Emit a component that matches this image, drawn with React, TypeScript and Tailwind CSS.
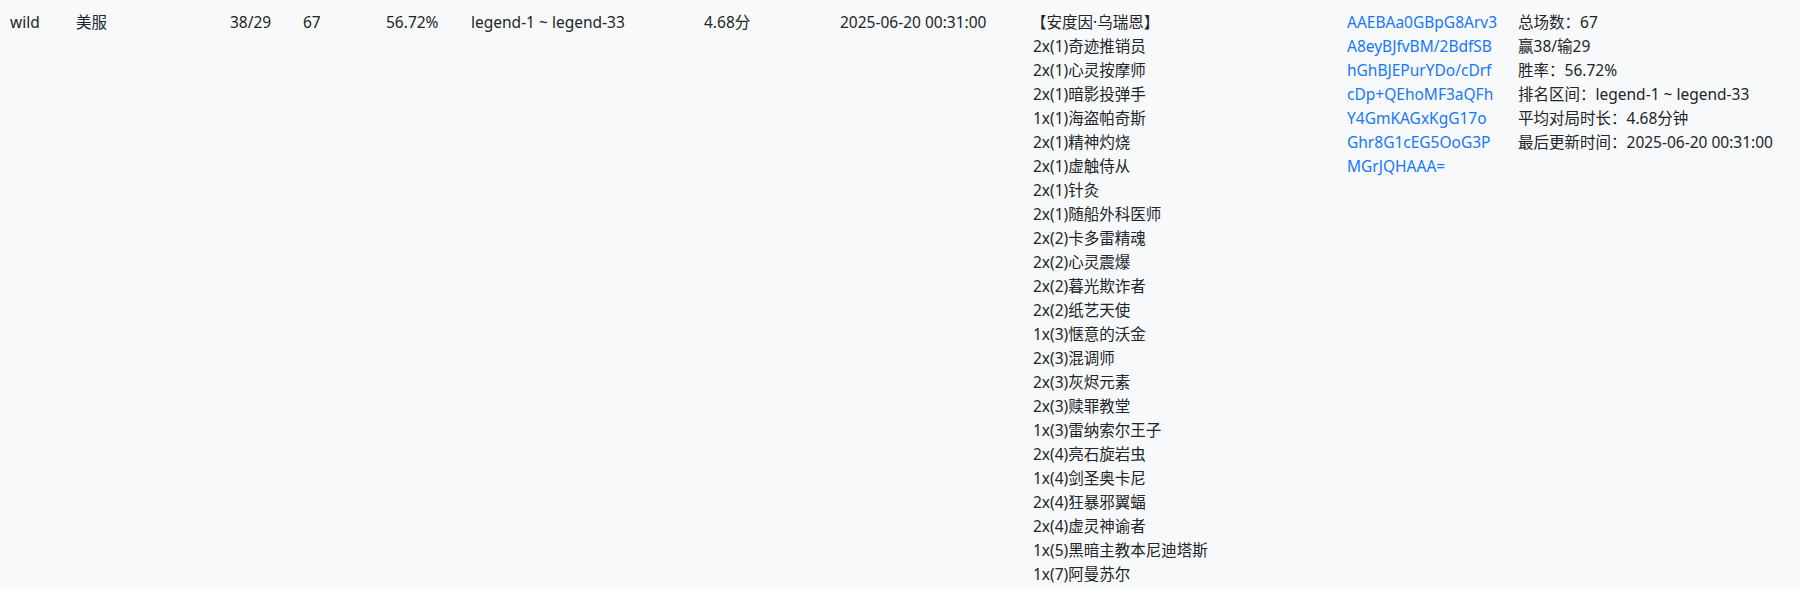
import React from 'react';

interface DeckRow {
  mode: string;
  server: string;
  record: string;
  games: number;
  winRate: string;
  rankRange: string;
  avgDuration: string;
  updatedAt: string;
  hero: string;
  cards: string[];
  code: string[];
}

const row: DeckRow = {
  mode: 'wild',
  server: '美服',
  record: '38/29',
  games: 67,
  winRate: '56.72%',
  rankRange: 'legend-1 ~ legend-33',
  avgDuration: '4.68分',
  updatedAt: '2025-06-20 00:31:00',
  hero: '【安度因·乌瑞恩】',
  cards: [
    '2x(1)奇迹推销员',
    '2x(1)心灵按摩师',
    '2x(1)暗影投弹手',
    '1x(1)海盗帕奇斯',
    '2x(1)精神灼烧',
    '2x(1)虚触侍从',
    '2x(1)针灸',
    '2x(1)随船外科医师',
    '2x(2)卡多雷精魂',
    '2x(2)心灵震爆',
    '2x(2)暮光欺诈者',
    '2x(2)纸艺天使',
    '1x(3)惬意的沃金',
    '2x(3)混调师',
    '2x(3)灰烬元素',
    '2x(3)赎罪教堂',
    '1x(3)雷纳索尔王子',
    '2x(4)亮石旋岩虫',
    '1x(4)剑圣奥卡尼',
    '2x(4)狂暴邪翼蝠',
    '2x(4)虚灵神谕者',
    '1x(5)黑暗主教本尼迪塔斯',
    '1x(7)阿曼苏尔',
  ],
  // deck code wraps inside the narrow column, keep the same breaks
  code: [
    'AAEBAa0GBpG8Arv3',
    'A8eyBJfvBM/2BdfSB',
    'hGhBJEPurYDo/cDrf',
    'cDp+QEhoMF3aQFh',
    'Y4GmKAGxKgG17o',
    'Ghr8G1cEG5OoG3P',
    'MGrJQHAAA=',
  ],
};

const cell = 'px-[10px] py-[10px] whitespace-nowrap';

export default function App() {
  const [wins, losses] = row.record.split('/');

  return (
    <div
      className="min-h-screen w-full bg-[#f8f9fa] text-[#212529] text-[15.5px] leading-6"
      style={{ fontFamily: '"Noto Sans", "Noto Sans CJK SC", sans-serif' }}
    >
      <div className="grid grid-cols-[66px_154px_73px_83px_85px_233px_136px_193px_314px_171px_1fr] items-start">
        <div className={cell}>{row.mode}</div>
        <div className={cell}>{row.server}</div>
        <div className={cell}>{row.record}</div>
        <div className={cell}>{row.games}</div>
        <div className={cell}>{row.winRate}</div>
        <div className={cell}>{row.rankRange}</div>
        <div className={cell}>{row.avgDuration}</div>
        <div className={cell}>{row.updatedAt}</div>
        <div className={cell}>
          <div className="-ml-[2px]">{row.hero}</div>
          {row.cards.map((c, i) => (
            <div key={i}>{c}</div>
          ))}
        </div>
        <div className={`${cell} text-[#1677ff]`}>
          {row.code.map((part, i) => (
            <div key={i}>{part}</div>
          ))}
        </div>
        <div className={cell}>
          <div>总场数：{row.games}</div>
          <div>
            赢{wins}/输{losses}
          </div>
          <div>胜率：{row.winRate}</div>
          <div>排名区间：{row.rankRange}</div>
          <div>平均对局时长：{row.avgDuration}钟</div>
          <div>最后更新时间：{row.updatedAt}</div>
        </div>
      </div>
    </div>
  );
}
